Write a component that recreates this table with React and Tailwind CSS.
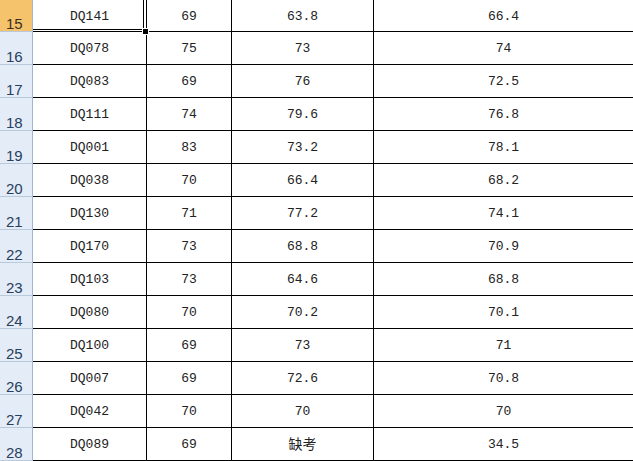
const rows = [
  ['15', 'DQ141', '69', '63.8', '66.4'],
  ['16', 'DQ078', '75', '73', '74'],
  ['17', 'DQ083', '69', '76', '72.5'],
  ['18', 'DQ111', '74', '79.6', '76.8'],
  ['19', 'DQ001', '83', '73.2', '78.1'],
  ['20', 'DQ038', '70', '66.4', '68.2'],
  ['21', 'DQ130', '71', '77.2', '74.1'],
  ['22', 'DQ170', '73', '68.8', '70.9'],
  ['23', 'DQ103', '73', '64.6', '68.8'],
  ['24', 'DQ080', '70', '70.2', '70.1'],
  ['25', 'DQ100', '69', '73', '71'],
  ['26', 'DQ007', '69', '72.6', '70.8'],
  ['27', 'DQ042', '70', '70', '70'],
  ['28', 'DQ089', '69', '缺考', '34.5'],
];

function Cell({ children, className = '' }) {
  return (
    <div className={`flex items-center justify-center pt-[2px] border-b border-black ${className}`}>
      {children}
    </div>
  );
}

export default function App() {
  return (
    <div className="w-[633px] h-[461px] overflow-hidden bg-white font-['Liberation_Mono','Noto_Sans_CJK_SC',monospace] text-[13px] text-[#222]">
      {rows.map(([num, id, a, b, c], i) => (
        <div key={num} className={`flex ${i === 0 ? 'h-[32px]' : 'h-[33px]'}`}>
          {/* row header */}
          <div
            className={`w-[33px] shrink-0 flex items-end pl-[6px] leading-none border-r border-r-[#9eb6ce] border-b border-b-[#b9c9dc] font-['Liberation_Sans',sans-serif] text-[15px] ${
              i === 0 ? 'bg-[#f5c36c] text-[#3b3020]' : 'bg-[#e4ecf7] text-[#27405e]'
            }`}
          >
            {num}
          </div>
          <Cell className="w-[114px] shrink-0 border-r relative">
            {id}
            {i === 0 && (
              <>
                <span className="absolute top-0 left-0 right-[2px] bottom-[1px] border-r border-b border-black" />
                <span className="absolute z-10 right-[-3px] bottom-[-4px] w-[7px] h-[7px] bg-black border border-white" />
              </>
            )}
          </Cell>
          <Cell className="w-[85px] shrink-0 border-r">{a}</Cell>
          <Cell className={`w-[142px] shrink-0 border-r ${b === '缺考' ? 'text-[14px]' : ''}`}>{b}</Cell>
          <Cell className="flex-1">{c}</Cell>
        </div>
      ))}
    </div>
  );
}
